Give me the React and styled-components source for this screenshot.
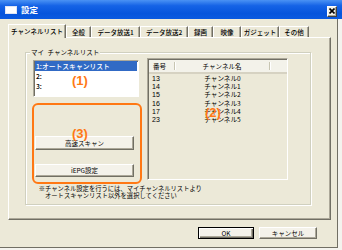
import React from 'react';
import styled, { createGlobalStyle } from 'styled-components';

const GlobalStyle = createGlobalStyle`
  * { box-sizing: border-box; }
  html, body { margin: 0; padding: 0; background: #f4f3ee; }
  body {
    width: 342px;
    height: 250px;
    overflow: hidden;
    font-family: "Noto Sans CJK JP", "Liberation Sans", sans-serif;
    color: #000;
  }
`;

const ORANGE = '#ff7814';

const tabs = [
  { label: 'チャンネルリスト', width: 58, active: true },
  { label: '全般', width: 25 },
  { label: 'データ放送1', width: 49 },
  { label: 'データ放送2', width: 48 },
  { label: '録画', width: 25 },
  { label: '映像', width: 28 },
  { label: 'ガジェット', width: 38 },
  { label: 'その他', width: 30 },
];

const channels = [
  ['13', 'チャンネル0'],
  ['14', 'チャンネル1'],
  ['15', 'チャンネル2'],
  ['16', 'チャンネル3'],
  ['17', 'チャンネル4'],
  ['23', 'チャンネル5'],
];

const myLists = ['1:オートスキャンリスト', '2:', '3:'];

const App = () => (
  <>
    <GlobalStyle />
    <Window>
      <TitleBar>
        <svg width="12" height="8" viewBox="0 0 12 8">
          <rect x="0.5" y="0.5" width="11" height="7" fill="#fff" stroke="#dfe6f5" />
        </svg>
        <Title>設定</Title>
        <CloseButton>
          <svg width="6" height="6" viewBox="0 0 6 6">
            <path d="M0.5 0.5 L5.5 5.5 M5.5 0.5 L0.5 5.5" stroke="#000" strokeWidth="1.6" />
          </svg>
        </CloseButton>
      </TitleBar>
      <Body>
        <TabStrip>
          {tabs.map(t => (
            <Tab key={t.label} width={t.width} active={t.active}>
              {t.label}
            </Tab>
          ))}
        </TabStrip>
        <Panel>
          <GroupBox>
            <Legend>マイ チャンネルリスト</Legend>
            <TopRow>
              <LeftCol>
                <ListBox>
                  {myLists.map((item, i) => (
                    <ListItem key={item} selected={i === 0}>
                      {item}
                    </ListItem>
                  ))}
                  <Annot left={38} top={13}>(1)</Annot>
                </ListBox>
                <Highlight>
                  <PushButton wide height={14}>高速スキャン</PushButton>
                  <PushButton wide height={13}>iEPG設定</PushButton>
                  <Annot left={38} top={22}>(3)</Annot>
                </Highlight>
              </LeftCol>
              <ListView>
                <Header>
                  <HeaderCell width={26}>番号</HeaderCell>
                  <HeaderCell width={95} center>チャンネル名</HeaderCell>
                  <HeaderFill />
                </Header>
                {channels.map(([num, name]) => (
                  <Row key={num}>
                    <NumCell>{num}</NumCell>
                    <NameCell>{name}</NameCell>
                  </Row>
                ))}
                <Annot left={57} top={47}>(2)</Annot>
              </ListView>
            </TopRow>
            <Note>
              ※チャンネル設定を行うには、マイチャンネルリストより
              <br />
              オートスキャンリスト以外を選択してください
            </Note>
          </GroupBox>
        </Panel>
        <Footer>
          <PushButton isDefault width={56} height={12}>OK</PushButton>
          <PushButton width={58} height={12}>キャンセル</PushButton>
        </Footer>
      </Body>
    </Window>
  </>
);

export default App;

const Window = styled.div`
  width: 342px;
  height: 250px;
  display: flex;
  flex-direction: column;
`;

const TitleBar = styled.div`
  height: 19px;
  display: flex;
  align-items: center;
  padding: 0 5px 0 5px;
  background: linear-gradient(#4a92f4 0%, #1563e6 30%, #0655dc 70%, #0a5ae0 100%);
  flex-shrink: 0;
`;

const Title = styled.span`
  margin-left: 4px;
  color: #fff;
  font-size: 8.5px;
  font-weight: bold;
  line-height: 1;
  flex: 1;
`;

const CloseButton = styled.div`
  width: 10px;
  height: 11px;
  margin-top: 3px;
  display: flex;
  align-items: center;
  justify-content: center;
  background: #f3f1e8;
  border: 1px solid;
  border-color: #fff #404040 #404040 #fff;
  box-shadow: inset -1px -1px 0 #aca899;
`;

const Body = styled.div`
  width: 338px;
  height: 229px;
  background: #ece9d8;
  border-right: 1px solid #716f64;
  border-bottom: 1px solid #716f64;
  padding: 5px 0 0 8px;
`;

const TabStrip = styled.div`
  height: 13px;
  display: flex;
  align-items: flex-end;
`;

const Tab = styled.div`
  position: relative;
  z-index: ${({ active }) => (active ? 1 : 0)};
  width: ${({ width }) => width}px;
  height: ${({ active }) => (active ? 14 : 11)}px;
  margin-bottom: ${({ active }) => (active ? -1 : 0)}px;
  display: flex;
  align-items: center;
  justify-content: center;
  padding-bottom: ${({ active }) => (active ? 1 : 0)}px;
  font-size: 6.5px;
  font-weight: 500;
  line-height: 1;
  white-space: nowrap;
  background: #ece9d8;
  border-top: 1px solid #fff;
  border-left: 1px solid #fff;
  border-right: 1px solid #716f64;
  box-shadow: inset -1px 0 0 #aca899;
`;

const Panel = styled.div`
  width: 323px;
  height: 183px;
  background: #ece9d8;
  border: 1px solid;
  border-color: #fff #716f64 #716f64 #fff;
  box-shadow: inset -1px -1px 0 #aca899;
  padding: 14px 0 0 16px;
`;

const GroupBox = styled.div`
  position: relative;
  width: 286px;
  height: 153px;
  border: 1px solid #d0d0bf;
  box-shadow: inset 1px 1px 0 #fff, 1px 1px 0 #fff;
`;

const Legend = styled.span`
  position: absolute;
  left: 4px;
  top: -5px;
  padding: 0 1px;
  background: #ece9d8;
  font-size: 6.5px;
  line-height: 9px;
  word-spacing: 2px;
  white-space: nowrap;
`;

const TopRow = styled.div`
  display: flex;
  align-items: flex-start;
  padding-top: 5px;
`;

const LeftCol = styled.div`
  display: flex;
  flex-direction: column;
  padding-left: 6px;
  width: 116px;
`;

const ListBox = styled.div`
  position: relative;
  margin: 2px 0 0 1px;
  width: 106px;
  height: 37px;
  background: #fff;
  border: 1px solid;
  border-color: #aca899 #fff #fff #aca899;
  box-shadow: inset 1px 1px 0 #716f64;
  padding: 0 1px;
`;

const ListItem = styled.div`
  height: 10px;
  display: flex;
  align-items: center;
  padding-left: 1px;
  font-size: 6.8px;
  font-weight: 500;
  line-height: 1;
  white-space: nowrap;
  color: ${({ selected }) => (selected ? '#fff' : '#000')};
  background: ${({ selected }) => (selected ? '#316ac5' : 'transparent')};
`;

const Highlight = styled.div`
  position: relative;
  margin-top: 6px;
  width: 110px;
  height: 81px;
  border: 2px solid ${ORANGE};
  border-radius: 6px;
  padding: 31px 0 0 1px;
  display: flex;
  flex-direction: column;
  gap: 14px;
`;

const PushButton = styled.div`
  width: ${({ wide, width }) => (wide ? 99 : width)}px;
  height: ${({ height }) => height}px;
  display: flex;
  align-items: center;
  justify-content: center;
  font-size: 6.5px;
  line-height: 1;
  white-space: nowrap;
  background: #f4f2ea;
  border: 1px solid;
  border-color: ${({ isDefault }) => (isDefault ? '#000' : '#fff #716f64 #716f64 #fff')};
  box-shadow: ${({ isDefault }) =>
    isDefault
      ? 'inset 1px 1px 0 #fff, inset -1px -1px 0 #716f64, inset -2px -2px 0 #aca899'
      : 'inset -1px -1px 0 #aca899'};
`;

const ListView = styled.div`
  position: relative;
  margin-left: 5px;
  width: 141px;
  height: 122px;
  background: #ece9d8;
  border: 1px solid;
  border-color: #aca899 #fff #fff #aca899;
  box-shadow: inset 1px 1px 0 #716f64;
  padding: 1px 0 0 1px;
`;

const Header = styled.div`
  display: flex;
  height: 14px;
  background: #f3f2ea;
  border-bottom: 2px solid #d6d2c2;
`;

const HeaderCell = styled.div`
  width: ${({ width }) => width}px;
  display: flex;
  align-items: center;
  justify-content: ${({ center }) => (center ? 'center' : 'flex-start')};
  padding-left: ${({ center }) => (center ? 0 : 4)}px;
  font-size: 6.5px;
  line-height: 1;
  white-space: nowrap;
  border-right: 1px solid #c7c5b2;
  box-shadow: 1px 0 0 #fff;
  margin: 2px 0;
`;

const HeaderFill = styled.div`
  flex: 1;
`;

const Row = styled.div`
  display: flex;
  height: 8.3px;
  align-items: center;
  font-size: 6.6px;
  line-height: 1;
`;

const NumCell = styled.div`
  width: 26px;
  padding-left: 3px;
  font-family: "Liberation Sans", "Noto Sans CJK JP", sans-serif;
  font-size: 7px;
`;

const NameCell = styled.div`
  width: 95px;
  text-align: center;
  white-space: nowrap;
`;

const Note = styled.div`
  margin-top: 1px;
  padding-left: 19px;
  text-indent: -6.3px;
  font-size: 6.3px;
  line-height: 7px;
  white-space: nowrap;
`;

const Annot = styled.span`
  position: absolute;
  left: ${({ left }) => left}px;
  top: ${({ top }) => top}px;
  color: ${ORANGE};
  font-family: "Liberation Sans", Arial, sans-serif;
  font-weight: bold;
  font-size: 13px;
  line-height: 1;
  white-space: nowrap;
`;

const Footer = styled.div`
  display: flex;
  justify-content: flex-end;
  gap: 5px;
  margin-top: 7px;
  padding-right: 20px;
`;
